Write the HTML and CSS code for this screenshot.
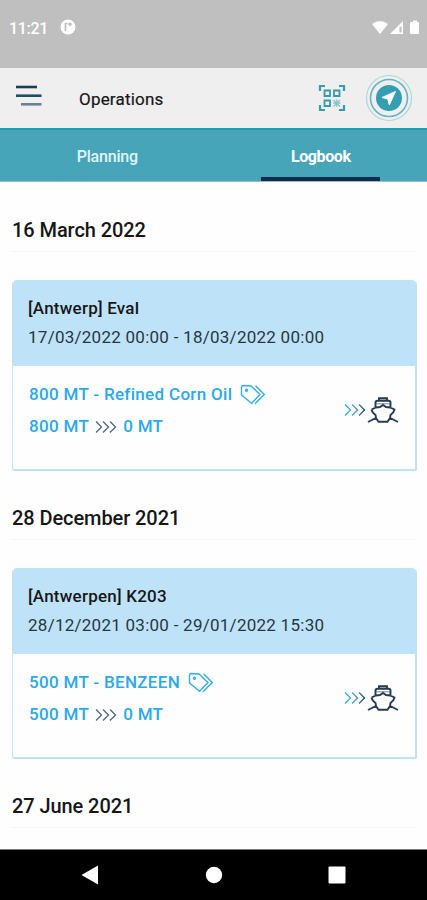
FILE: index.html
```html
<!DOCTYPE html>
<html lang="en">
<head>
<meta charset="utf-8">
<title>Operations</title>
<link rel="stylesheet" href="styles.css">
</head>
<body>
<svg class="defs" width="0" height="0" aria-hidden="true">
  <defs>
    <linearGradient id="fade" gradientUnits="userSpaceOnUse" x1="0" y1="0" x2="22" y2="0">
      <stop offset="0" stop-color="#25b2f5"/><stop offset=".5" stop-color="#4a9cc8"/><stop offset="1" stop-color="#20395a"/>
    </linearGradient>
    <symbol id="tags" viewBox="0 0 26 22">
      <path d="M1.500 3Q1.500 1.500 3 1.500L11 2 20 10.500 11.500 19.300 1.500 11Z"/><path d="M15.500 1.800 24.300 10.500 15 19.800"/><circle cx="6.500" cy="6.300" r="1"/>
    </symbol>
    <symbol id="arrows" viewBox="0 0 22 14">
      <path d="M1 1.500 6.500 7 1 12.500M8 1.500 13.500 7 8 12.500M15 1.500 20.500 7 15 12.500"/>
    </symbol>
    <symbol id="ship" viewBox="0 0 32 28">
      <path d="M12 4.500V2.200H20V4.500M8.500 11.500V6.500Q8.500 4.700 10.500 4.700H21.500Q23.500 4.700 23.500 6.500V11.500M4.500 13.500 9 11.500 13 11 16 9 19 11 23 11.500 27.500 13.500Q27 16.500 23.500 19L23 22M4.500 13.500Q5 16.500 8.500 19L9 22M1 26 9 22 11.500 25.700H20.500L23 22 31 26"/>
      <path d="M9 7.800H23" stroke-width="1" opacity=".6"/>
    </symbol>
  </defs>
</svg>
<div class="screen">
  <div class="status">
    <span class="clock">11:21</span>
    <svg class="notice" width="16" height="16" viewBox="0 0 16 16"><circle cx="8" cy="8" r="7.500" fill="#fff"/><path d="M5.500 12V4.500H7.500M10 3.500V7M8.200 5.200H11.800" fill="none" stroke="#bfbfbf" stroke-width="1.700"/></svg>
    <svg class="signals" width="50" height="16" viewBox="0 0 50 16"><path d="M0 4Q8-2 16 4L8 14Z" fill="#fff"/><path d="M31 1V14H18Z" fill="#fff"/><path d="M27.500 6.500H29.500V12.500H27.500Z" fill="#bfbfbf"/><path d="M38 3Q38 2 39 2H41V.5H45V2H46Q47 2 47 3V13Q47 14 46 14H39Q38 14 38 13Z" fill="#fff"/></svg>
  </div>
  <header class="appbar">
    <svg class="menu" width="27" height="22" viewBox="0 0 27 22"><path d="M1 2H22" stroke="#1b3b5c"/><path d="M1 10.700H26.500" stroke="#1b4c69"/><path d="M6 19.300H26.500" stroke="#6d8091"/></svg>
    <h1>Operations</h1>
    <svg class="scan" width="28" height="28" viewBox="0 0 28 28" fill="none" stroke="#349cb1">
      <path d="M2 7V2H7M21 2H26V7M26 21V26H21M7 26H2V21" stroke-width="2.200"/>
      <path d="M6.500 6.500H12V12H6.500ZM16 6.500H21.500V12H16ZM6.500 16.500H12V22H6.500Z" stroke-width="1.800"/>
      <path d="M15.500 16 22 22.500M22 16 15.500 22.500M18.700 15.500V23M15 19.200H22.500" stroke-width="1.200" opacity=".55"/>
    </svg>
    <svg class="locate" width="48" height="48" viewBox="0 0 48 48"><circle cx="24" cy="24" r="22.500" fill="none" stroke="#acd7dc" stroke-width="1.200"/><circle cx="24" cy="24" r="18.500" fill="none" stroke="#68b5c2" stroke-width="1.600"/><circle cx="24" cy="24" r="13" fill="#349fb3"/><path d="M30.500 17.500 17 23.500 22.800 25 24.300 31Z" fill="#fff" stroke="#fff" stroke-linejoin="round"/></svg>
  </header>
  <nav class="tabs">
    <a class="tab">Planning</a>
    <a class="tab active">Logbook</a>
  </nav>
  <main class="list">
    <section class="day">
      <h2>16 March 2022</h2>
      <article class="card">
        <div class="head"><h3>[Antwerp] Eval</h3><p>17/03/2022 00:00 - 18/03/2022 00:00</p></div>
        <div class="body">
          <div class="cargo">
            <div class="row"><span>800 MT - Refined Corn Oil</span><svg class="tags"><use href="#tags"/></svg></div>
            <div class="row"><span>800 MT</span><svg class="arrows"><use href="#arrows"/></svg><span>0 MT</span></div>
          </div>
          <div class="load"><svg class="arrows blue"><use href="#arrows"/></svg><svg class="ship"><use href="#ship"/></svg></div>
        </div>
      </article>
    </section>
    <section class="day">
      <h2>28 December 2021</h2>
      <article class="card">
        <div class="head"><h3>[Antwerpen] K203</h3><p>28/12/2021 03:00 - 29/01/2022 15:30</p></div>
        <div class="body">
          <div class="cargo">
            <div class="row"><span>500 MT - BENZEEN</span><svg class="tags"><use href="#tags"/></svg></div>
            <div class="row"><span>500 MT</span><svg class="arrows"><use href="#arrows"/></svg><span>0 MT</span></div>
          </div>
          <div class="load"><svg class="arrows blue"><use href="#arrows"/></svg><svg class="ship"><use href="#ship"/></svg></div>
        </div>
      </article>
    </section>
    <section class="day">
      <h2>27 June 2021</h2>
    </section>
  </main>
  <footer class="system">
    <svg width="18" height="20" viewBox="0 0 18 20"><path d="M.5 10 17 .5V19.500Z"/></svg>
    <svg width="18" height="20" viewBox="0 0 18 20"><circle cx="9" cy="10" r="8.200"/></svg>
    <svg width="18" height="20" viewBox="0 0 18 20"><rect x=".5" y="1.500" width="17" height="17" rx="1"/></svg>
  </footer>
</div>
</body>
</html>
```
FILE: styles.css
```css
* { box-sizing: border-box; }
body { margin: 0; font-family: Roboto, "Liberation Sans", sans-serif; color: #171717; }
h1, h2, h3, p { margin: 0; }
svg { display: block; flex: none; }
.defs { position: absolute; }
.screen { width: 427px; height: 900px; display: flex; flex-direction: column; overflow: hidden; background: #fefefe; }
.status { height: 68px; flex: none; background: #bfbfbf; display: flex; align-items: flex-start; padding: 18px 5px 0 9px; color: #fff; }
.clock { width: 51px; font-size: 16px; line-height: 21px; font-weight: 500; letter-spacing: -.3px; }
.notice { margin-top: 1px; }
.signals { margin: 2px 0 0 auto; }
.appbar { height: 60px; flex: none; background: #efefef; display: flex; align-items: center; padding: 0 15px; }
.menu { stroke-width: 2.600; margin-top: -5px; }
.appbar h1 { margin: 2px auto 0 37px; font-size: 17px; line-height: 20px; font-weight: 400; letter-spacing: .2px; -webkit-text-stroke: .2px; }
.scan { margin-right: 19px; }
.locate { margin-right: -1px; }
.tabs { height: 54px; flex: none; display: grid; grid-template-columns: 1fr 1fr; justify-items: center; background: #47a5ba; border-top: 2px solid #259bb1; border-bottom: 1px solid #a0bbc5; }
.tab { width: 119px; height: 51px; padding-left: 1px; text-align: center; font-size: 16px; line-height: 53px; font-weight: 500; letter-spacing: -.2px; color: #e0f4f7; }
.tab.active { color: #fff; font-weight: 700; letter-spacing: -.4px; border-bottom: 4px solid #102c4a; }
.list { flex: 1; min-height: 0; padding: 25px 10px 0 12px; overflow: hidden; }
.day { height: 288px; }
.day h2 { height: 45px; padding-top: 1px; font-size: 20px; line-height: 44px; font-weight: 500; border-bottom: 1px solid #f4f4f4; letter-spacing: -.08px; }
.card { height: 191px; margin-top: 28px; border: 2px solid #bfe2f5; border-left-width: 1.500px; border-top: 0; border-radius: 5px 5px 2px 2px; overflow: hidden; }
.head { height: 86px; background: #bee3f8; padding: 14px 14px 0 15px; }
.head h3 { font-size: 17px; line-height: 28px; font-weight: 500; letter-spacing: .22px; }
.head p { font-size: 17px; line-height: 30px; color: #263743; letter-spacing: .26px; }
.body { display: flex; justify-content: space-between; padding: 13px 16px 0 16px; }
.row { display: flex; align-items: center; height: 32px; font-size: 17px; line-height: 30px; font-weight: 500; color: #2aa9eb; letter-spacing: .32px; }
.row span { margin-top: -2px; }
.tags { width: 26px; height: 22px; margin: -1px 0 0 8px; fill: none; stroke: #35adea; stroke-width: 1.400; }
.arrows { width: 22px; height: 14px; margin: -1px 6px 0; fill: none; stroke: #53657a; stroke-width: 1.300; }
.load { display: flex; align-items: center; height: 62px; }
.arrows.blue { stroke: url(#fade); margin: 0 1px 0 0; }
.ship { width: 32px; height: 28px; fill: none; stroke: #263b55; stroke-width: 1.900; }
.system { height: 51px; flex: none; border-top: 1px solid #777; background: #000; display: flex; justify-content: space-between; padding: 15px 81px 0; }
.system svg { fill: #fff; }
```
